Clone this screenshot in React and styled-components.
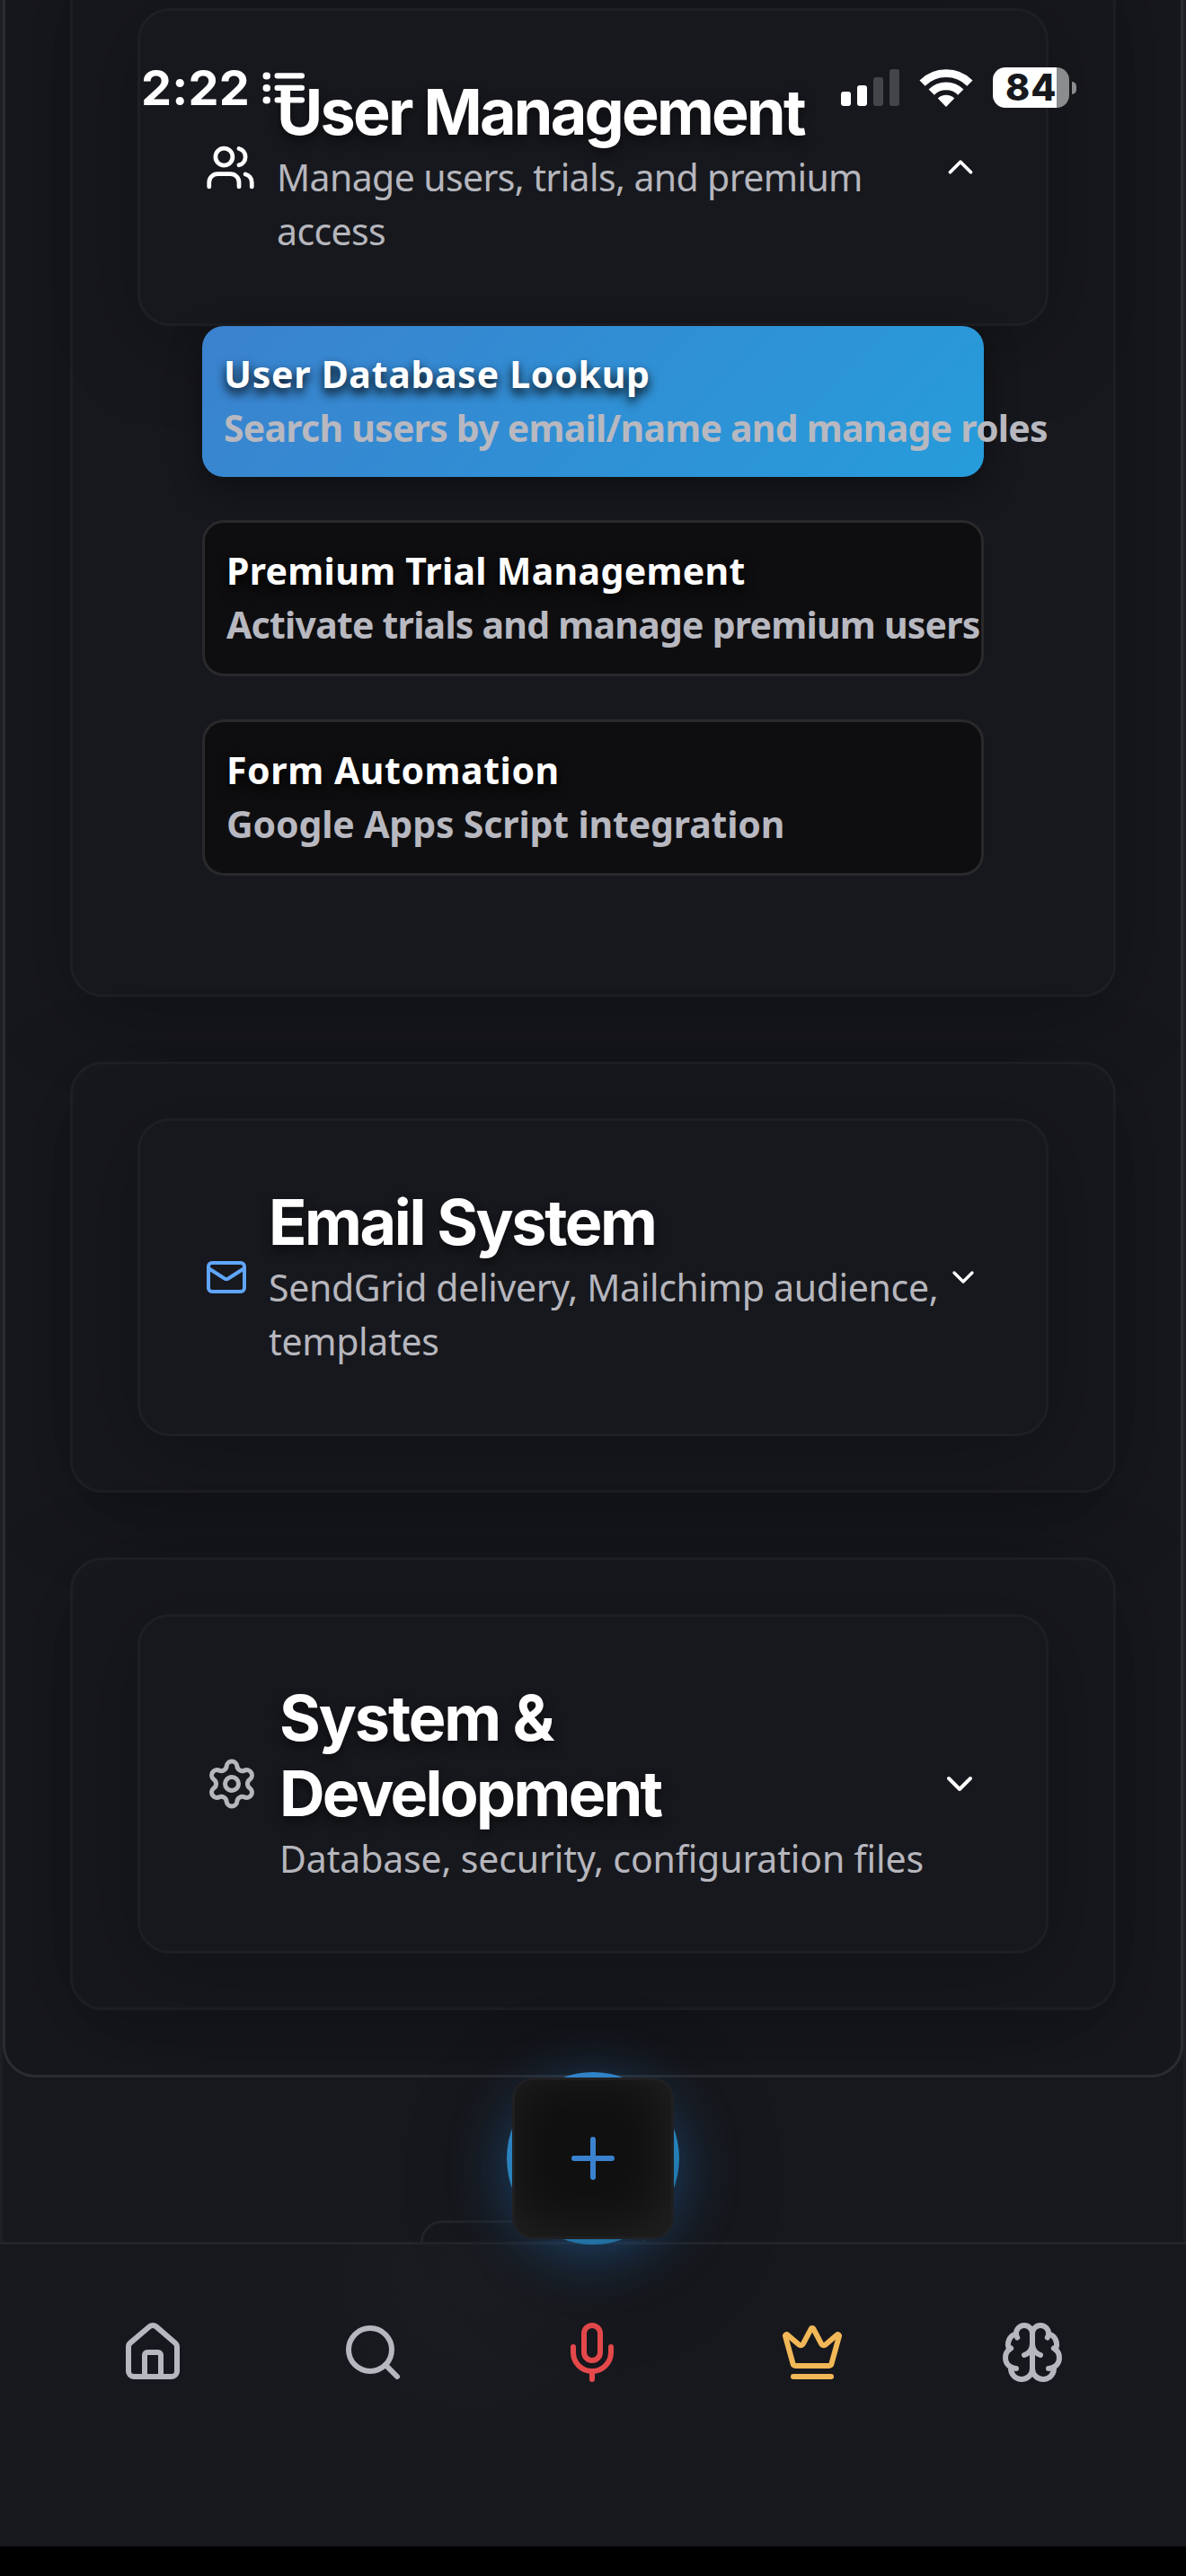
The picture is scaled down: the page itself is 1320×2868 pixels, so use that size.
import React from 'react';
import styled, { createGlobalStyle, css } from 'styled-components';
import { Users, Mail, Settings, ChevronUp, ChevronDown, Plus, House, Search, Mic, Crown } from 'lucide-react';

const color = {
  page: '#17181d',
  line: '#1d1f24',
  lineStrong: '#2b2c31',
  muted: '#b6b6bd',
  blue: '#3b82ce',
  sky: '#269cdb',
};

const GlobalStyle = createGlobalStyle`
  * { box-sizing: border-box; }
  body { margin: 0; background: #000; }
  h2, p { margin: 0; font-weight: inherit; }
`;

const Screen = styled.div`
  position: relative;
  width: 1320px;
  height: 2868px;
  display: flex;
  flex-direction: column;
  overflow: hidden;
  background: #000;
  color: #fff;
  font-family: "Noto Sans", "Open Sans", sans-serif;
`;

const Scroller = styled.main`
  height: 2496px;
  flex: none;
  overflow: hidden;
  display: flex;
  flex-direction: column;
  background: ${color.page};
  border: solid ${color.line};
  border-width: 0 3px;
`;

const Panel = styled.div`
  flex: none;
  margin-top: -129px;
  padding: 72px;
  display: flex;
  flex-direction: column;
  gap: 72px;
  border: 3px solid ${color.lineStrong};
  border-radius: 36px;
  overflow: hidden;
`;

const cardSurface = css`
  background: ${color.page};
  border: 3px solid ${color.line};
  border-radius: 36px;
  box-shadow: 0 18px 96px rgba(0, 0, 0, 0.27);
`;

const Section = styled.section`
  ${cardSurface}
  padding: 60px 72px;
`;

const SectionHeader = styled.header`
  ${cardSurface}
  padding: 72px;
  display: flex;
  align-items: center;

  > svg { flex: none; }
`;

const HeaderText = styled.div`
  flex: 1;
  min-width: 0;
  padding: 0 6px 0 23px;
`;

const Title = styled.h2`
  font: 700 70px/84px Inter, sans-serif;
  margin: -1px 0 1px;
  text-shadow: 0 6px 12px rgba(0, 0, 0, 0.5);
`;

const TitleLine = styled.span`
  display: block;
  letter-spacing: ${(p) => p.$tracking}px;
`;

const Subtitle = styled.p`
  font-size: 41px;
  line-height: 60px;
  color: ${color.muted};
  letter-spacing: ${(p) => p.$tracking}px;
  margin: -1px 0 1px;
`;

const ItemList = styled.div`
  display: flex;
  flex-direction: column;
  gap: 48px;
  padding: 0 72px 72px;
`;

const Item = styled.div`
  padding: 23px 24px 25px;
  border-radius: 24px;
  font-size: 41px;
  font-weight: 700;
  line-height: 60px;
  white-space: nowrap;
  ${(p) =>
    p.$active
      ? css`
          background: linear-gradient(135deg, ${color.blue}, ${color.sky});
          box-shadow: 0 12px 36px rgba(0, 0, 0, 0.4);
        `
      : css`
          background: #0e0e10;
          border: 3px solid #29292b;
        `}
`;

const ItemTitle = styled.div`
  letter-spacing: ${(p) => p.$tracking}px;
  text-shadow: 0 6px 12px #000;
`;

const ItemText = styled.div`
  letter-spacing: ${(p) => p.$tracking}px;
  color: #b8b8c0;
`;

const NextCard = styled.div`
  flex: none;
  width: 250px;
  height: 60px;
  margin: 159px 0 0 465px;
  border: 3px solid #222428;
  border-radius: 24px;
`;

const NavBar = styled.nav`
  height: 339px;
  flex: none;
  display: flex;
  align-items: flex-start;
  padding: 84px 48.5px 0 47.5px;
  border-top: 3px solid #232428;
  background: radial-gradient(circle 190px at 525px 40px, #1a1c21, ${color.page});
`;

const NavItem = styled.a`
  flex: 1;
  display: flex;
  justify-content: center;
  color: ${(p) => p.$tint || '#b7b7bf'};
`;

/* Floating "create" button, centred over the top edge of the nav bar */
const FabRing = styled.div`
  position: absolute;
  left: 564px;
  top: 2307px;
  width: 192px;
  height: 192px;
  border-radius: 50%;
  display: flex;
  align-items: center;
  justify-content: center;
  background: linear-gradient(160deg, #3583cd, #2581b8 55%, #1f6998);
  box-shadow: 0 12px 66px rgba(38, 120, 200, 0.48), 0 24px 120px rgba(0, 0, 0, 0.25);
`;

const FabButton = styled.div`
  flex: none;
  width: 180px;
  height: 180px;
  border: 3px solid #202022;
  border-radius: 24px;
  display: flex;
  align-items: center;
  justify-content: center;
  color: ${color.blue};
  background: #101011;
  box-shadow: inset -6px -8px 60px rgba(255, 255, 255, 0.075);
`;

const StatusBar = styled.div`
  position: absolute;
  inset: 0 0 auto 0;
  height: 195px;
  padding: 0 122px 0 157px;
  display: flex;
  align-items: center;
`;

const Clock = styled.span`
  font: 750 54px/54px Inter, sans-serif;
  letter-spacing: 0.2px;
`;

const FocusIcon = styled.svg`
  margin: 0 auto 0 14px;
`;

const SignalBars = styled.div`
  height: 41px;
  display: flex;
  align-items: flex-end;
  gap: 7px;
`;

const SignalBar = styled.i`
  width: 11px;
  height: ${(p) => p.$height}px;
  border-radius: 3px;
  background: ${(p) => (p.$on ? '#fff' : '#444549')};
`;

const Wifi = styled.svg`
  margin: 0 22px;
`;

const Battery = styled.div`
  width: 85px;
  height: 45px;
  border-radius: 14px;
  background: linear-gradient(90deg, #fff 71px, #8b8c8e 71px);
  color: ${color.page};
  font: 800 41px/45px Inter, sans-serif;
  letter-spacing: 1px;
  padding-left: 14px;
  white-space: nowrap;
`;

const BatteryCap = styled.i`
  width: 5px;
  height: 14px;
  margin-left: 3px;
  border-radius: 0 5px 5px 0;
  background: #8b8c8e;
`;

const BrainIcon = ({ size }) => (
  <svg width={size} height={size} viewBox="0 0 24 24" fill="none" stroke="currentColor" strokeWidth="2" strokeLinecap="round" strokeLinejoin="round">
    <path d="M12 5a3 3 0 1 0-5.997.125 4 4 0 0 0-2.526 5.77 4 4 0 0 0 .556 6.588A4 4 0 1 0 12 18Z" />
    <path d="M12 5a3 3 0 1 1 5.997.125 4 4 0 0 1 2.526 5.77 4 4 0 0 1-.556 6.588A4 4 0 1 1 12 18Z" />
    <path d="M15 13a4.5 4.5 0 0 1-3-4 4.5 4.5 0 0 1-3 4" />
    <path d="M17.599 6.5a3 3 0 0 0 .399-1.375" />
    <path d="M6.003 5.125A3 3 0 0 0 6.401 6.5" />
    <path d="M3.477 10.896a4 4 0 0 1 .585-.396" />
    <path d="M19.938 10.5a4 4 0 0 1 .585.396" />
    <path d="M6 18a4 4 0 0 1-1.967-.516" />
    <path d="M19.967 17.484A4 4 0 0 1 18 18" />
  </svg>
);

const sections = [
  {
    icon: <Users size={57} />,
    chevron: <ChevronUp size={46} />,
    title: [['User Management', -2.75]],
    subtitle: ['Manage users, trials, and premium access', -0.62],
    items: [
      { active: true, title: ['User Database Lookup', 0.72], text: ['Search users by email/name and manage roles', -0.77] },
      { title: ['Premium Trial Management', 0.3], text: ['Activate trials and manage premium users', -0.77] },
      { title: ['Form Automation', 0.56], text: ['Google Apps Script integration', -0.15] },
    ],
  },
  {
    icon: <Mail size={48} color="#60a5fa" />,
    chevron: <ChevronDown size={40} />,
    title: [['Email System', -2.4]],
    subtitle: ['SendGrid delivery, Mailchimp audience, templates', -0.34],
  },
  {
    icon: <Settings size={60} color={color.muted} />,
    chevron: <ChevronDown size={48} />,
    title: [['System &', -2.1], ['Development', -2.7]],
    subtitle: ['Database, security, configuration files', -0.15],
  },
];

const navItems = [
  { name: 'home', icon: <House size={72} /> },
  { name: 'search', icon: <Search size={72} /> },
  { name: 'voice', icon: <Mic size={72} />, tint: '#e5494b' },
  { name: 'premium', icon: <Crown size={72} />, tint: '#f2b757' },
  { name: 'brain', icon: <BrainIcon size={72} /> },
];

function AdminSection({ icon, chevron, title, subtitle, items }) {
  return (
    <Section>
      <SectionHeader>
        {icon}
        <HeaderText>
          <Title>
            {title.map(([text, tracking]) => (
              <TitleLine key={text} $tracking={tracking}>{text}</TitleLine>
            ))}
          </Title>
          <Subtitle $tracking={subtitle[1]}>{subtitle[0]}</Subtitle>
        </HeaderText>
        {chevron}
      </SectionHeader>
      {items && (
        <ItemList>
          {items.map((item) => (
            <Item key={item.title[0]} $active={item.active}>
              <ItemTitle $tracking={item.title[1]}>{item.title[0]}</ItemTitle>
              <ItemText $tracking={item.text[1]}>{item.text[0]}</ItemText>
            </Item>
          ))}
        </ItemList>
      )}
    </Section>
  );
}

export default function App() {
  return (
    <Screen>
      <GlobalStyle />
      <Scroller>
        <Panel>
          {sections.map((section) => (
            <AdminSection key={section.title[0][0]} {...section} />
          ))}
        </Panel>
        <NextCard />
      </Scroller>
      <NavBar>
        {navItems.map((item) => (
          <NavItem key={item.name} $tint={item.tint}>{item.icon}</NavItem>
        ))}
      </NavBar>
      <FabRing>
        <FabButton>
          <Plus size={72} />
        </FabButton>
      </FabRing>
      <StatusBar>
        <Clock>2:22</Clock>
        <FocusIcon width="48" height="36" viewBox="0 0 48 36" fill="#fff">
          {[0, 13.5, 27].map((y) => (
            <React.Fragment key={y}>
              <rect x="0.5" y={y + 0.5} width="8.5" height="8" rx="4" />
              <rect x="13.5" y={y + 1.2} width="33.5" height="6.4" rx="3" />
            </React.Fragment>
          ))}
        </FocusIcon>
        <SignalBars>
          <SignalBar $height={16} $on />
          <SignalBar $height={23} $on />
          <SignalBar $height={32} />
          <SignalBar $height={41} />
        </SignalBars>
        <Wifi width="60" height="42" viewBox="0 0 60 42">
          <g fill="none" stroke="#fff" strokeWidth="8.8">
            <path d="M3.6 15.6A37.4 37.4 0 0 1 56.4 15.6" />
            <path d="M13.7 25.7A23 23 0 0 1 46.3 25.7" />
          </g>
          <path d="M30 42L20.8 32.6A13.2 13.2 0 0 1 39.2 32.6Z" fill="#fff" />
        </Wifi>
        <Battery>84</Battery>
        <BatteryCap />
      </StatusBar>
    </Screen>
  );
}
